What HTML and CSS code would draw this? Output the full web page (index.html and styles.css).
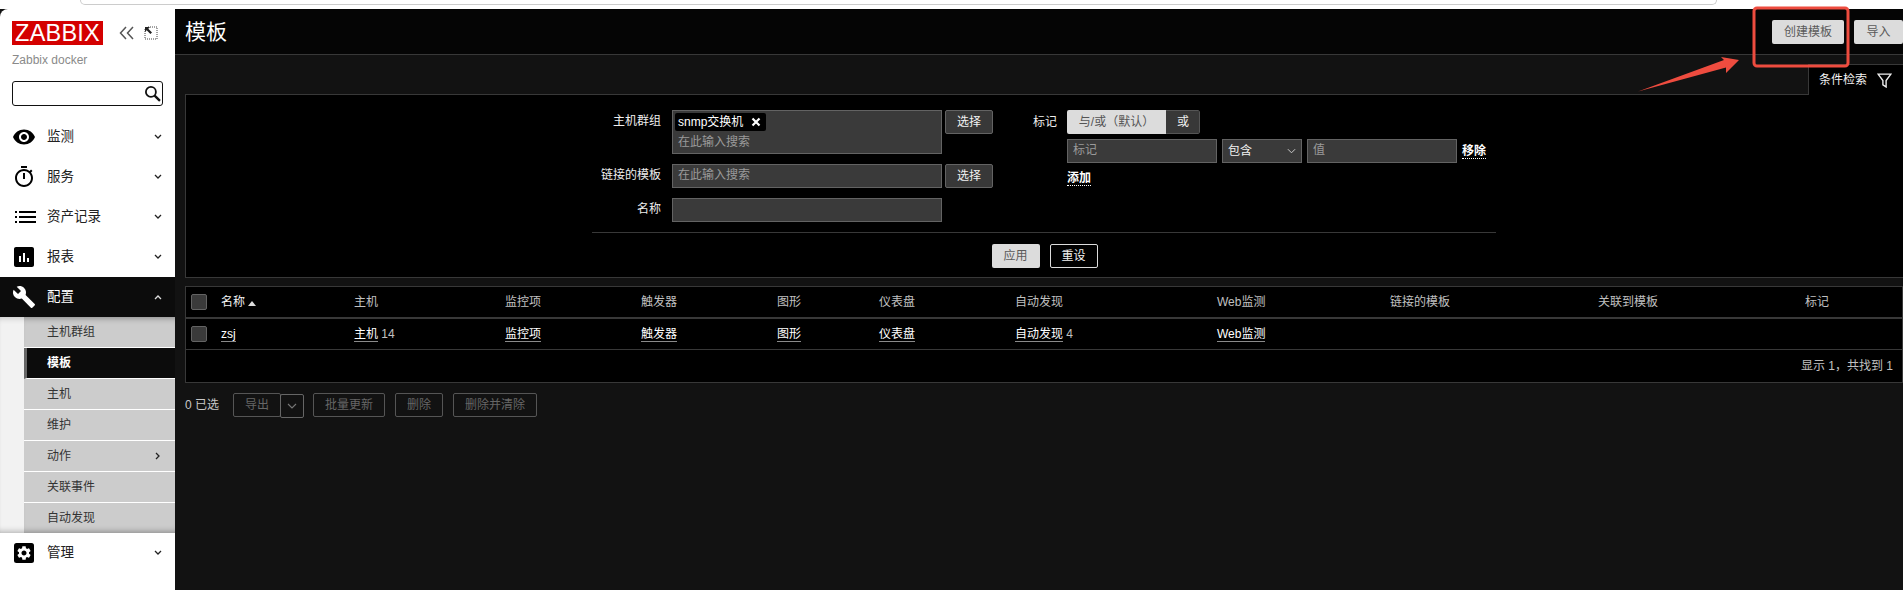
FILE: index.html
```html
<!DOCTYPE html>
<html lang="zh-CN">
<head>
<meta charset="utf-8">
<title>模板</title>
<link rel="stylesheet" href="styles.css">
</head>
<body>
<div class="chrome"><div class="urlbar"></div></div>
<div class="app">
  <aside class="sidebar">
    <div class="brand">
      <div class="logo">ZABBIX</div>
      <svg class="tool tool-a" viewBox="0 0 16 14"><path d="M7 1 1.500 7 7 13M14 1 8.500 7 14 13" fill="none" stroke="#555" stroke-width="1.500"/></svg>
      <svg class="tool tool-b" viewBox="0 0 14 14"><path d="M1 3V13H13V1H3" fill="none" stroke="#444" stroke-dasharray="1 1"/><path d="M1 1H6L4.300 2.700 8 6.400 6.400 8 2.700 4.300 1 6Z" fill="#222"/></svg>
    </div>
    <div class="server">Zabbix docker</div>
    <div class="search">
      <svg viewBox="0 0 16 16"><circle cx="6.500" cy="6.500" r="4.700" fill="none" stroke="#111" stroke-width="1.700"/><path d="M10 10l5 5" stroke="#111" stroke-width="2.200"/></svg>
    </div>
    <nav class="menu">
      <div class="item">
        <svg class="ico" viewBox="0 0 24 24"><path d="M12 4.500C7 4.500 2.730 7.610 1 12c1.730 4.390 6 7.500 11 7.500s9.270-3.110 11-7.500c-1.730-4.390-6-7.500-11-7.500zM12 17c-2.760 0-5-2.240-5-5s2.240-5 5-5 5 2.240 5 5-2.240 5-5 5zm0-8c-1.660 0-3 1.340-3 3s1.340 3 3 3 3-1.340 3-3-1.340-3-3-3z"/></svg>
        <span class="label">监测</span>
        <svg class="chev" viewBox="0 0 8 6"><path d="M1 1l3 3 3-3" fill="none" stroke="#222" stroke-width="1.300"/></svg>
      </div>
      <div class="item">
        <svg class="ico" viewBox="0 0 24 24"><path d="M15 1H9v2h6V1zm-4 13h2V8h-2v6zm8.030-6.610l1.420-1.420c-.43-.51-.9-.99-1.410-1.410l-1.420 1.420C16.070 4.740 14.120 4 12 4c-4.970 0-9 4.030-9 9s4.020 9 9 9 9-4.030 9-9c0-2.120-.74-4.070-1.970-5.610zM12 20c-3.870 0-7-3.130-7-7s3.130-7 7-7 7 3.130 7 7-3.130 7-7 7z"/></svg>
        <span class="label">服务</span>
        <svg class="chev" viewBox="0 0 8 6"><path d="M1 1l3 3 3-3" fill="none" stroke="#222" stroke-width="1.300"/></svg>
      </div>
      <div class="item">
        <svg class="ico" viewBox="0 0 24 24"><path d="M3 6h2v2H3zM7 6h17v2H7zM3 11h2v2H3zM7 11h17v2H7zM3 16h2v2H3zM7 16h17v2H7z"/></svg>
        <span class="label">资产记录</span>
        <svg class="chev" viewBox="0 0 8 6"><path d="M1 1l3 3 3-3" fill="none" stroke="#222" stroke-width="1.300"/></svg>
      </div>
      <div class="item">
        <svg class="ico" viewBox="0 0 24 24"><path d="M20 2H4c-1.100 0-2 .9-2 2v16c0 1.100.9 2 2 2h16c1.100 0 2-.9 2-2V4c0-1.100-.9-2-2-2zM9 17H7v-6h2v6zm4 0h-2V8h2v9zm4 0h-2v-4h2v4z"/></svg>
        <span class="label">报表</span>
        <svg class="chev" viewBox="0 0 8 6"><path d="M1 1l3 3 3-3" fill="none" stroke="#222" stroke-width="1.300"/></svg>
      </div>
      <div class="item item-open">
        <svg class="ico" viewBox="0 0 24 24"><path d="M22.700 19l-9.100-9.100c.9-2.300.4-5-1.500-6.900-2-2-5-2.400-7.400-1.300L9 6 6 9 1.600 4.700C.4 7.100.9 10.100 2.900 12.100c1.900 1.900 4.600 2.400 6.900 1.500l9.100 9.100c.4.4 1 .4 1.400 0l2.300-2.300c.5-.4.5-1.100.1-1.400z"/></svg>
        <span class="label">配置</span>
        <svg class="chev" viewBox="0 0 8 6"><path d="M1 5l3-3 3 3" fill="none" stroke="#ddd" stroke-width="1.300"/></svg>
      </div>
      <div class="submenu">
        <div class="sub sub-first">主机群组</div>
        <div class="sub sub-active">模板</div>
        <div class="sub">主机</div>
        <div class="sub">维护</div>
        <div class="sub">动作<svg class="chev-r" viewBox="0 0 6 8"><path d="M1 1l3 3-3 3" fill="none" stroke="#222" stroke-width="1.300"/></svg></div>
        <div class="sub">关联事件</div>
        <div class="sub sub-last">自动发现</div>
      </div>
      <div class="item">
        <svg class="ico" viewBox="0 0 24 24"><rect x="2" y="2" width="20" height="20" rx="2.500" fill="#000"/><g transform="translate(3.600 3.600) scale(.7)"><path fill="#fff" d="M19.140 12.940c.04-.3.060-.61.060-.94 0-.32-.02-.64-.07-.94l2.030-1.580c.18-.14.23-.41.12-.61l-1.920-3.320c-.12-.22-.37-.29-.59-.22l-2.390.96c-.5-.38-1.030-.7-1.620-.94l-.36-2.540c-.04-.24-.24-.41-.48-.41h-3.840c-.24 0-.43.170-.47.410l-.36 2.540c-.59.240-1.130.570-1.620.940l-2.390-.96c-.22-.08-.47 0-.59.220L2.740 8.870c-.12.210-.08.470.12.610l2.030 1.580c-.05.3-.09.630-.09.940s.02.640.07.940l-2.030 1.580c-.18.140-.23.410-.12.610l1.920 3.320c.12.220.37.290.59.220l2.390-.96c.5.380 1.030.7 1.620.94l.36 2.540c.05.240.24.410.48.410h3.840c.24 0 .44-.17.470-.41l.36-2.540c.59-.24 1.130-.56 1.620-.94l2.390.96c.22.080.47 0 .59-.22l1.920-3.320c.12-.22.070-.47-.12-.61l-2.010-1.580zM12 15.600c-1.980 0-3.600-1.620-3.600-3.600s1.620-3.600 3.600-3.600 3.600 1.620 3.600 3.600-1.620 3.600-3.600 3.600z"/></g></svg>
        <span class="label">管理</span>
        <svg class="chev" viewBox="0 0 8 6"><path d="M1 1l3 3 3-3" fill="none" stroke="#222" stroke-width="1.300"/></svg>
      </div>
    </nav>
  </aside>

  <main class="main">
    <header class="head">
      <h1 class="title">模板</h1>
      <div class="head-actions">
        <button class="btn-light btn-create">创建模板</button>
        <button class="btn-light btn-import">导入</button>
      </div>
    </header>
    <div class="tabbar">
      <div class="tab">条件检索
        <svg class="funnel" viewBox="0 0 14 14"><path d="M1 1H13L8.500 7V13L5.500 11V7Z" fill="none" stroke="#eee" stroke-width="1.300"/></svg>
      </div>
    </div>
    <section class="filter">
      <div class="filter-cols">
        <div class="col-left">
          <div class="field">
            <label class="flabel">主机群组</label>
            <div class="input multi">
              <span class="chip">snmp交换机<svg class="chip-x" viewBox="0 0 10 10"><path d="M1.500 1.500l7 7M8.500 1.500l-7 7" stroke="#fff" stroke-width="2.200"/></svg></span>
              <span class="ph ph-multi">在此输入搜索</span>
            </div>
            <button class="btn-dark">选择</button>
          </div>
          <div class="field">
            <label class="flabel">链接的模板</label>
            <div class="input"><span class="ph">在此输入搜索</span></div>
            <button class="btn-dark">选择</button>
          </div>
          <div class="field">
            <label class="flabel">名称</label>
            <div class="input"></div>
          </div>
        </div>
        <div class="col-right">
          <div class="tag-top">
            <label class="tlabel">标记</label>
            <div class="toggle"><span class="tog-on">与/或（默认）</span><span class="tog-off">或</span></div>
          </div>
          <div class="tag-row">
            <div class="input tag-in"><span class="ph">标记</span></div>
            <div class="input tag-sel">包含<svg class="sel-chev" viewBox="0 0 10 6"><path d="M1 1l4 4 4-4" fill="none" stroke="#ccc" stroke-width="1.100"/></svg></div>
            <div class="input tag-in"><span class="ph">值</span></div>
            <a class="dot-link">移除</a>
          </div>
          <a class="dot-link add-link">添加</a>
        </div>
      </div>
      <div class="filter-sep"></div>
      <div class="filter-btns">
        <button class="btn-light">应用</button>
        <button class="btn-outline">重设</button>
      </div>
    </section>

    <section class="list">
      <table class="grid">
        <thead>
          <tr>
            <th class="c-check"><span class="check"></span></th>
            <th class="c-name th-main">名称<span class="sort"></span></th>
            <th class="c-host">主机</th>
            <th class="c-items">监控项</th>
            <th class="c-trig">触发器</th>
            <th class="c-graph">图形</th>
            <th class="c-dash">仪表盘</th>
            <th class="c-disc">自动发现</th>
            <th class="c-web">Web监测</th>
            <th class="c-linked">链接的模板</th>
            <th class="c-linkto">关联到模板</th>
            <th class="c-tags">标记</th>
          </tr>
        </thead>
        <tbody>
          <tr>
            <td><span class="check"></span></td>
            <td><a class="lnk">zsj</a></td>
            <td><a class="lnk">主机</a> <span class="count">14</span></td>
            <td><a class="lnk">监控项</a></td>
            <td><a class="lnk">触发器</a></td>
            <td><a class="lnk">图形</a></td>
            <td><a class="lnk">仪表盘</a></td>
            <td><a class="lnk">自动发现</a> <span class="count">4</span></td>
            <td><a class="lnk">Web监测</a></td>
            <td></td>
            <td></td>
            <td></td>
          </tr>
        </tbody>
      </table>
      <div class="paging">显示 1，共找到 1</div>
    </section>

    <div class="actions">
      <span class="selected">0 已选</span>
      <div class="split">
        <button class="btn-off btn-export">导出</button>
        <button class="btn-off btn-caret"><svg viewBox="0 0 10 6"><path d="M1 1l4 4 4-4" fill="none" stroke="#777" stroke-width="1.100"/></svg></button>
      </div>
      <button class="btn-off btn-w72">批量更新</button>
      <button class="btn-off btn-w48">删除</button>
      <button class="btn-off btn-w84">删除并清除</button>
    </div>
  </main>
</div>
<svg class="annotation" viewBox="0 0 1903 590">
  <rect x="1754" y="8" width="94" height="58" rx="3" fill="none" stroke="#ee4c3f" stroke-width="3"/>
  <path d="M1638 91.500 1724 60 1721 57 1739 60 1726 73 1726 67.500Z" fill="#ee4c3f"/>
</svg>
</body>
</html>
```

FILE: styles.css
```css
* { box-sizing: border-box; }
html, body { margin: 0; height: 590px; overflow: hidden; }
body {
  display: flex;
  flex-direction: column;
  background: #121212;
  font: 12px/14px "Liberation Sans", "Noto Sans CJK SC", sans-serif;
  color: #f2f2f2;
}
.chrome { height: 9px; background: #fff; padding-left: 80px; flex: none; }
.urlbar {
  width: 1637px; height: 5px;
  border: 1px solid #ccc; border-top: 0;
  border-radius: 0 0 10px 10px;
}
.app { display: flex; flex: 1; min-height: 0; }

/* sidebar */
.sidebar {
  width: 175px; flex: none;
  background: #fff; color: #111;
  padding-top: 12px;
  border-top-left-radius: 8px;
}
.brand { display: flex; align-items: center; padding-left: 12px; height: 24px; }
.logo {
  width: 91px; height: 24px;
  background: #d40000; color: #fff;
  font-size: 23.500px; line-height: 25px; text-align: center;
  letter-spacing: .2px;
}
.tool { display: block; }
.tool-a { width: 16px; height: 14px; margin: 0 0 0 16px; }
.tool-b { width: 14px; height: 14px; margin-left: 9px; }
.server { margin: 8px 0 0 12px; color: #8a8a8a; font-size: 12px; line-height: 14px; }
.search {
  margin: 14px 12px 0;
  height: 25px; width: 151px;
  border: 1.500px solid #111; border-radius: 3px;
  display: flex; align-items: center; justify-content: flex-end;
  padding-right: 1px;
}
.search svg { width: 17px; height: 17px; }
.menu { margin-top: 11px; }
.item { height: 40px; display: flex; align-items: center; padding-left: 12px; font-size: 13.500px; }
.ico { width: 24px; height: 24px; fill: #000; flex: none; }
.label { margin-left: 11px; flex: 1; color: #222; }
.chev { width: 8px; height: 6px; margin-right: 13px; }
.item-open { background: #0c0c0c; }
.item-open .ico { fill: #fff; }
.item-open .label { color: #fff; }
.submenu {
  background: #f2f2f2;
  padding-left: 24px;
  box-shadow: inset 0 6px 6px -5px rgba(0,0,0,.2), inset 0 -6px 6px -5px rgba(0,0,0,.3);
}
.sub {
  height: 31px;
  display: flex; align-items: center; justify-content: space-between;
  padding: 0 14px 0 23px;
  background: #ccc; color: #333;
  border-bottom: 1px solid #fff;
  font-size: 12px;
}
.sub-first { box-shadow: inset 0 6px 6px -5px rgba(0,0,0,.35); }
.sub-last { border-bottom: 0; height: 30px; box-shadow: inset 0 -6px 6px -5px rgba(0,0,0,.35); }
.sub-active {
  background: #0c0c0c; color: #fff;
  border-left: 3px solid #666;
  padding-left: 20px;
  font-weight: 700;
}
.chev-r { width: 6px; height: 8px; }

/* main */
.main { flex: 1; min-width: 0; background: #121212; }
.head {
  height: 46px;
  background: #050505;
  border-bottom: 1px solid #383838;
  display: flex; justify-content: space-between;
  padding: 11px 0 0 10px;
}
.title { margin: 0; font-size: 21px; line-height: 24px; font-weight: 400; color: #fff; }
.head-actions { display: flex; gap: 10px; }
button { font: inherit; height: 24px; padding: 0; cursor: pointer; }
.btn-light { width: 48px; background: #dcdcdc; border: 0; border-radius: 2px; color: #5a5a5a; }
.btn-create { width: 72px; }
.btn-import { width: 49px; }
.tabbar { height: 39px; display: flex; justify-content: flex-end; padding-top: 9px; }
.tab {
  width: 95px; height: 31px;
  background: #000;
  border: 1px solid #383838; border-right: 0; border-bottom: 0;
  display: flex; align-items: center;
  padding: 0 0 0 10px;
  color: #f2f2f2;
  position: relative; z-index: 1;
}
.funnel { width: 15px; height: 15px; margin-left: 10px; }
.filter {
  margin-left: 10px;
  height: 184px;
  background: #000;
  border: 1px solid #383838; border-right: 0;
  padding-top: 15px;
}
.filter-cols { display: flex; margin-left: 406px; gap: 40px; height: 122px; }
.col-left { width: 401px; display: flex; flex-direction: column; gap: 10px; }
.field { display: flex; align-items: flex-start; }
.flabel { width: 69px; text-align: right; margin-right: 11px; line-height: 22px; white-space: nowrap; color: #eee; }
.input {
  width: 270px; height: 24px;
  background: #3a3a3a;
  border: 1px solid #636363;
  padding: 0 5px;
  line-height: 21px;
  color: #f2f2f2;
}
.multi { height: 44px; padding: 2px; display: flex; flex-direction: column; align-items: flex-start; line-height: 14px; }
.chip {
  height: 18px; padding: 0 4px 0 3px;
  background: #000; color: #fff; border-radius: 2px;
  display: inline-flex; align-items: center;
}
.chip-x { width: 10px; height: 10px; margin: 0 1px 0 8px; }
.ph { color: #9a9a9a; }
.ph-multi { margin: 4px 0 0 3px; }
.btn-dark {
  width: 48px; margin-left: 3px;
  background: #383838; border: 1px solid #636363; border-radius: 2px;
  color: #f2f2f2;
}
.tag-top { display: flex; align-items: center; }
.tlabel { width: 34px; margin-right: 0; color: #eee; }
.toggle { display: flex; height: 24px; width: 133px; border-radius: 2px; overflow: hidden; }
.tog-on { width: 99px; background: #dcdcdc; color: #555; text-align: center; line-height: 24px; }
.tog-off { flex: 1; background: #383838; border: 1px solid #555; border-left: 0; color: #eee; text-align: center; line-height: 22px; border-radius: 0 2px 2px 0; padding-left: 1px; }
.tag-row { display: flex; margin: 5px 0 0 34px; gap: 5px; align-items: flex-start; }
.tag-in { width: 150px; }
.tag-sel { width: 80px; position: relative; padding-top: 1px; }
.sel-chev { width: 9px; height: 6px; position: absolute; right: 5px; top: 8px; }
.dot-link { color: #fff; font-weight: 700; border-bottom: 1px dotted #fff; line-height: 14px; margin-top: 5px; }
.add-link { display: inline-block; margin: 8px 0 0 34px; }
.filter-sep { margin-left: 406px; width: 904px; border-top: 1px solid #383838; }
.filter-btns { display: flex; justify-content: center; gap: 10px; margin: 11px 0 0 0; padding-left: 0; }
.btn-outline { width: 48px; background: transparent; border: 1px solid #dcdcdc; border-radius: 2px; color: #f2f2f2; }

/* list */
.list {
  margin: 8px 0 0 10px;
  height: 97px;
  background: #000;
  border: 1px solid #383838;
}
.grid { width: 100%; border-collapse: collapse; table-layout: fixed; }
.grid th { height: 31px; padding: 0; text-align: left; font-weight: 400; color: #c0c0c0; border-bottom: 2px solid #383838; }
.grid td { height: 31px; padding: 0; border-bottom: 1px solid #383838; color: #c0c0c0; }
.grid th.th-main { color: #f2f2f2; }
.c-check { width: 35px; }
.c-name { width: 133px; }
.c-host { width: 151px; }
.c-items { width: 136px; }
.c-trig { width: 136px; }
.c-graph { width: 102px; }
.c-dash { width: 136px; }
.c-disc { width: 202px; }
.c-web { width: 173px; }
.c-linked { width: 208px; }
.c-linkto { width: 207px; }
.check {
  display: block; width: 16px; height: 16px; margin-left: 5px;
  background: #3a3a3a; border: 1px solid #636363; border-radius: 2px;
}
.sort {
  display: inline-block; margin-left: 3px;
  border: 4px solid transparent; border-top: 0; border-bottom: 5px solid #ddd;
  vertical-align: 0;
}
.lnk { color: #fff; border-bottom: 1px solid #8a8a8a; font-weight: 400; }
.paging { height: 32px; line-height: 32px; text-align: right; padding-right: 9px; color: #c0c0c0; }

.actions { display: flex; align-items: flex-start; margin: 10px 0 0 10px; }
.selected { width: 48px; line-height: 25px; color: #c8c8c8; }
.split { display: flex; margin-right: 9px; }
.btn-off {
  background: transparent; border: 1px solid #555; border-radius: 2px; color: #666;
  margin-right: 10px;
}
.split .btn-off { margin-right: 0; }
.btn-export, .btn-w48 { width: 48px; }
.btn-w72 { width: 72px; }
.btn-w84 { width: 84px; }
.btn-caret { width: 24px; margin-top: 1px; margin-left: -1px; border-color: #666; }
.btn-caret svg { width: 10px; height: 6px; display: block; margin: auto; }

.annotation { position: absolute; left: 0; top: 0; width: 1903px; height: 590px; pointer-events: none; z-index: 5; }
```
